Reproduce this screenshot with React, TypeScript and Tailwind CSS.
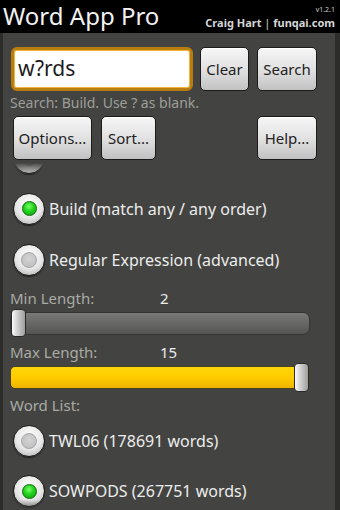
import React from 'react';

const FONT = "font-['Noto_Sans','Open_Sans',sans-serif]";

function Button({ label, className = '' }: { label: string; className?: string }) {
  return (
    <div
      className={`flex h-[44px] items-center justify-center rounded-[5px] border border-[#1b1b1b] bg-linear-to-b from-[#f6f6f6] via-[#e2e2e2] to-[#c2c2c2] text-[15px] text-[#222] shadow-[inset_0_1px_0_#fff] ${className}`}
    >
      {label}
    </div>
  );
}

function Radio({ checked }: { checked: boolean }) {
  return (
    <div className="flex h-[32px] w-[32px] shrink-0 items-center justify-center rounded-full border border-[#1c1c1c] bg-[radial-gradient(circle_at_50%_35%,#ffffff_0%,#e6e6e6_55%,#a9a9a9_100%)] shadow-[0_1px_1px_rgba(0,0,0,0.5)]">
      {checked ? (
        <div className="h-[15px] w-[15px] rounded-full border border-[#0c6a0c] bg-[radial-gradient(circle_at_45%_35%,#7dff6e_0%,#1fd21a_45%,#0f9a0f_100%)]" />
      ) : (
        <div className="h-[16px] w-[16px] rounded-full border border-[#a6a6a6] bg-[radial-gradient(circle_at_50%_40%,#d4d4d4_0%,#c2c2c2_70%,#b0b0b0_100%)]" />
      )}
    </div>
  );
}

function RadioRow({ label, checked, h = 'h-[51px]' }: { label?: string; checked: boolean; h?: string }) {
  return (
    <div className={`flex ${h} items-center pl-[10px]`}>
      <Radio checked={checked} />
      {label && <span className="ml-[4px] whitespace-nowrap text-[16px] text-[#ececec]">{label}</span>}
    </div>
  );
}

function Thumb() {
  return (
    <div className="h-full w-[15px] rounded-[4px] border border-[#2a2a2a] bg-linear-to-r from-[#fafafa] via-[#c9c9c9] to-[#9e9e9e]" />
  );
}

function Label({ text, value, className = '' }: { text: string; value?: string; className?: string }) {
  return (
    <div className={`flex h-[22px] items-center pl-[7px] text-[15px] ${className}`}>
      <span className="w-[150px] text-[#a9aaa5]">{text}</span>
      {value && <span className="text-[#ededed]">{value}</span>}
    </div>
  );
}

export default function App() {
  return (
    <div className={`flex h-[510px] w-[340px] flex-col overflow-hidden bg-[#2c2d2a] ${FONT}`}>
      {/* title bar */}
      <header className="flex h-[33px] shrink-0 items-end justify-between bg-black pr-[5px] pl-[3px]">
        <span className="mb-[1px] text-[24px] leading-[32px] text-[#f2f2f2]">Word App Pro</span>
        <div className="flex flex-col items-end">
          <span className="text-[7px] leading-[10px] text-[#cfcfcf]">v1.2.1</span>
          <span className="mb-[2px] text-[11px] leading-[16px] font-bold text-[#d6d6d6]">
            Craig Hart <span className="font-normal">|</span> funqai.com
          </span>
        </div>
      </header>

      <main className="mr-[5px] mb-[10px] ml-[3px] flex flex-1 flex-col bg-[#434441]">
        {/* search row */}
        <div className="flex items-center pt-[14px] pl-[8px]">
          <div className="flex h-[44px] w-[182px] items-center rounded-[6px] border-[3px] border-[#b97c0e] bg-white pl-[4px] text-[21px] text-[#1c1c1c] shadow-[inset_0_0_0_1px_#f3b43a]">
            w?rds
          </div>
          <Button label="Clear" className="ml-[7px] w-[49px]" />
          <Button label="Search" className="ml-[8px] w-[60px]" />
        </div>
        <div className="mt-[1px] pl-[7px] text-[14px] leading-[22px] text-[#9d9e99]">Search: Build. Use ? as blank.</div>

        {/* option buttons */}
        <div className="mt-[2px] flex items-center pl-[10px]">
          <Button label="Options..." className="w-[79px]" />
          <Button label="Sort..." className="ml-[9px] w-[55px]" />
          <Button label="Help..." className="ml-[101px] w-[60px]" />
        </div>

        {/* scroll view */}
        <div className="relative mt-[3px] flex-1 overflow-hidden">
          <div className="-mt-[31px] flex flex-col">
            <RadioRow checked={false} />
            <RadioRow label="Build (match any / any order)" checked />
            <RadioRow label="Regular Expression (advanced)" checked={false} />

            <Label text="Min Length:" value="2" className="mt-[2px]" />
            <div className="relative flex h-[28px] items-center pl-[7px]">
              <div className="h-[23px] w-[300px] rounded-[7px] border border-[#353634] bg-linear-to-b from-[#7a7b78] to-[#545552]" />
              <div className="absolute top-0 bottom-0 left-[8px]">
                <Thumb />
              </div>
            </div>

            <Label text="Max Length:" value="15" className="mt-[4px]" />
            <div className="relative flex h-[29px] items-center pl-[7px]">
              <div className="h-[23px] w-[300px] rounded-[5px] border border-[#4a4222] bg-linear-to-b from-[#ffd60a] via-[#ffcc00] to-[#f0b400]" />
              <div className="absolute top-0 bottom-0 left-[291px]">
                <Thumb />
              </div>
            </div>

            <Label text="Word List:" className="mt-[2px]" />
            <RadioRow label="TWL06 (178691 words)" checked={false} h="h-[50px]" />
            <RadioRow label="SOWPODS (267751 words)" checked h="h-[50px]" />
          </div>

          {/* fading edges */}
          <div className="pointer-events-none absolute top-0 right-0 left-0 h-[12px] bg-linear-to-b from-[#434441] to-transparent" />
          <div className="pointer-events-none absolute right-0 bottom-0 left-0 h-[16px] bg-linear-to-t from-[#434441] to-transparent" />
        </div>
      </main>
    </div>
  );
}
